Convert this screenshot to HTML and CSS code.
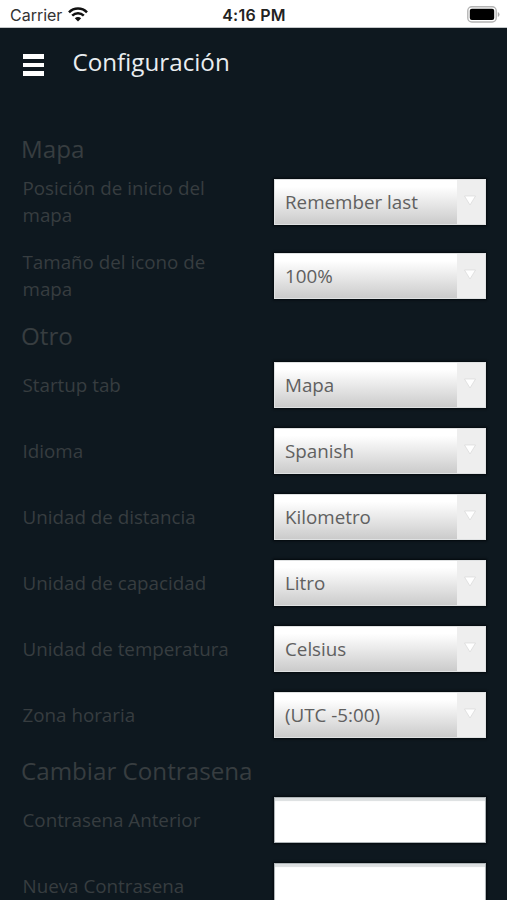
FILE: index.html
```html
<!DOCTYPE html>
<html lang="es">
<head>
<meta charset="utf-8">
<title>Configuración</title>
<link rel="stylesheet" href="styles.css">
</head>
<body>
<div class="status">
  <div class="carrier"><span>Carrier</span>
    <svg width="20" height="15" viewBox="0 0 20 15" fill="none" stroke="#111" stroke-width="2.5"><path d="M1 5.4C6 .3 14 .3 19 5.4M4.2 8.7c3.3-3.2 8.3-3.2 11.6 0"/><path d="M6.8 11.3c1.8-1.7 4.6-1.7 6.4 0L10 14.5z" fill="#111" stroke="none"/></svg>
  </div>
  <div class="time">4:16 PM</div>
  <svg class="battery" width="33" height="17" viewBox="0 0 33 17"><rect x=".8" y=".8" width="28.4" height="15.2" rx="4" fill="#fff" stroke="#b4b4b4" stroke-width="1.4"/><rect x="2.8" y="2.8" width="24.4" height="11.2" rx="2" fill="#000"/><path d="M30.8 6v5q1.7-.7 1.7-2.5T30.8 6z" fill="#aaa"/></svg>
</div>
<header class="header">
  <div class="menu"><i></i><i></i><i></i></div>
  <h1>Configuración</h1>
</header>
<main class="settings">
  <h2>Mapa</h2>
  <section>
    <div class="row"><label>Posición de inicio del mapa</label><div class="select"><span>Remember last</span><b><svg width="12" height="11" viewBox="0 0 12 11"><path d="M.5 1h11L6 10z"/></svg></b></div></div>
    <div class="row"><label>Tamaño del icono de mapa</label><div class="select"><span>100%</span><b><svg width="12" height="11" viewBox="0 0 12 11"><path d="M.5 1h11L6 10z"/></svg></b></div></div>
  </section>
  <h2>Otro</h2>
  <section>
    <div class="row"><label>Startup tab</label><div class="select"><span>Mapa</span><b><svg width="12" height="11" viewBox="0 0 12 11"><path d="M.5 1h11L6 10z"/></svg></b></div></div>
    <div class="row"><label>Idioma</label><div class="select"><span>Spanish</span><b><svg width="12" height="11" viewBox="0 0 12 11"><path d="M.5 1h11L6 10z"/></svg></b></div></div>
    <div class="row"><label>Unidad de distancia</label><div class="select"><span>Kilometro</span><b><svg width="12" height="11" viewBox="0 0 12 11"><path d="M.5 1h11L6 10z"/></svg></b></div></div>
    <div class="row"><label>Unidad de capacidad</label><div class="select"><span>Litro</span><b><svg width="12" height="11" viewBox="0 0 12 11"><path d="M.5 1h11L6 10z"/></svg></b></div></div>
    <div class="row"><label>Unidad de temperatura</label><div class="select"><span>Celsius</span><b><svg width="12" height="11" viewBox="0 0 12 11"><path d="M.5 1h11L6 10z"/></svg></b></div></div>
    <div class="row"><label>Zona horaria</label><div class="select"><span>(UTC -5:00)</span><b><svg width="12" height="11" viewBox="0 0 12 11"><path d="M.5 1h11L6 10z"/></svg></b></div></div>
  </section>
  <h2>Cambiar Contrasena</h2>
  <section>
    <div class="row"><label>Contrasena Anterior</label><div class="input"></div></div>
    <div class="row"><label>Nueva Contrasena</label><div class="input"></div></div>
  </section>
</main>
</body>
</html>
```

FILE: styles.css
```css
* { box-sizing: border-box; }
body { margin: 0; height: 900px; overflow: hidden; background: #0e181f; font-family: "Open Sans", sans-serif; }
.status { height: 28px; padding: 0 7px 0 10px; background: #fff; border-bottom: 1px solid #c4c7c9; display: grid; grid-template-columns: 1fr auto 1fr; align-items: center; font: 16px/28px Inter, sans-serif; color: #333; }
.carrier { display: flex; align-items: center; gap: 6px; }
.carrier span { padding-top: 1px; letter-spacing: -.02px; }
.time { font-weight: 600; color: #222; padding: 1px 2px 0 0; letter-spacing: .25px; }
.battery { justify-self: end; }
.header { height: 88px; padding: 18px 22px 0 23px; display: flex; align-items: flex-start; gap: 28.5px; }
.menu { width: 21px; padding-top: 8px; display: flex; flex-direction: column; gap: 4px; }
.menu i { height: 4.5px; background: #fff; }
h1 { margin: 0; font-size: 24.2px; line-height: 32px; font-weight: 400; color: #e9edf0; }
.settings { padding: 0 21px 0 21px; }
h2 { margin: 0; height: 59px; padding-top: 3px; font-size: 24.2px; line-height: 59px; font-weight: 400; color: #373d40; }
section { display: grid; gap: 20px; }
.row { display: grid; grid-template-columns: 210px 212px; justify-content: space-between; align-items: center; }
label { font-size: 18.8px; line-height: 27px; color: #373d40; padding-left: 1.5px; }
.select, .input { height: 46px; border: 1px solid #dfe1e2; box-shadow: 0 0 2px 1px #04090d; }
.select { display: flex; background: linear-gradient(#fff 15%, #cbcbcb); font-size: 18.8px; line-height: 44px; color: #606060; }
.select span { flex: 1; padding-left: 10px; }
.select b { width: 28px; background: #eee; padding: 15px 0 0 7px; line-height: 0; }
.select path { fill: #fff; stroke: #d8d8d8; stroke-width: .7; }
.input { background: #fff; border-color: #aeb4b7; box-shadow: 0 0 2px 1px #04090d, inset 0 3px 1px #dcdfe0; }
```
